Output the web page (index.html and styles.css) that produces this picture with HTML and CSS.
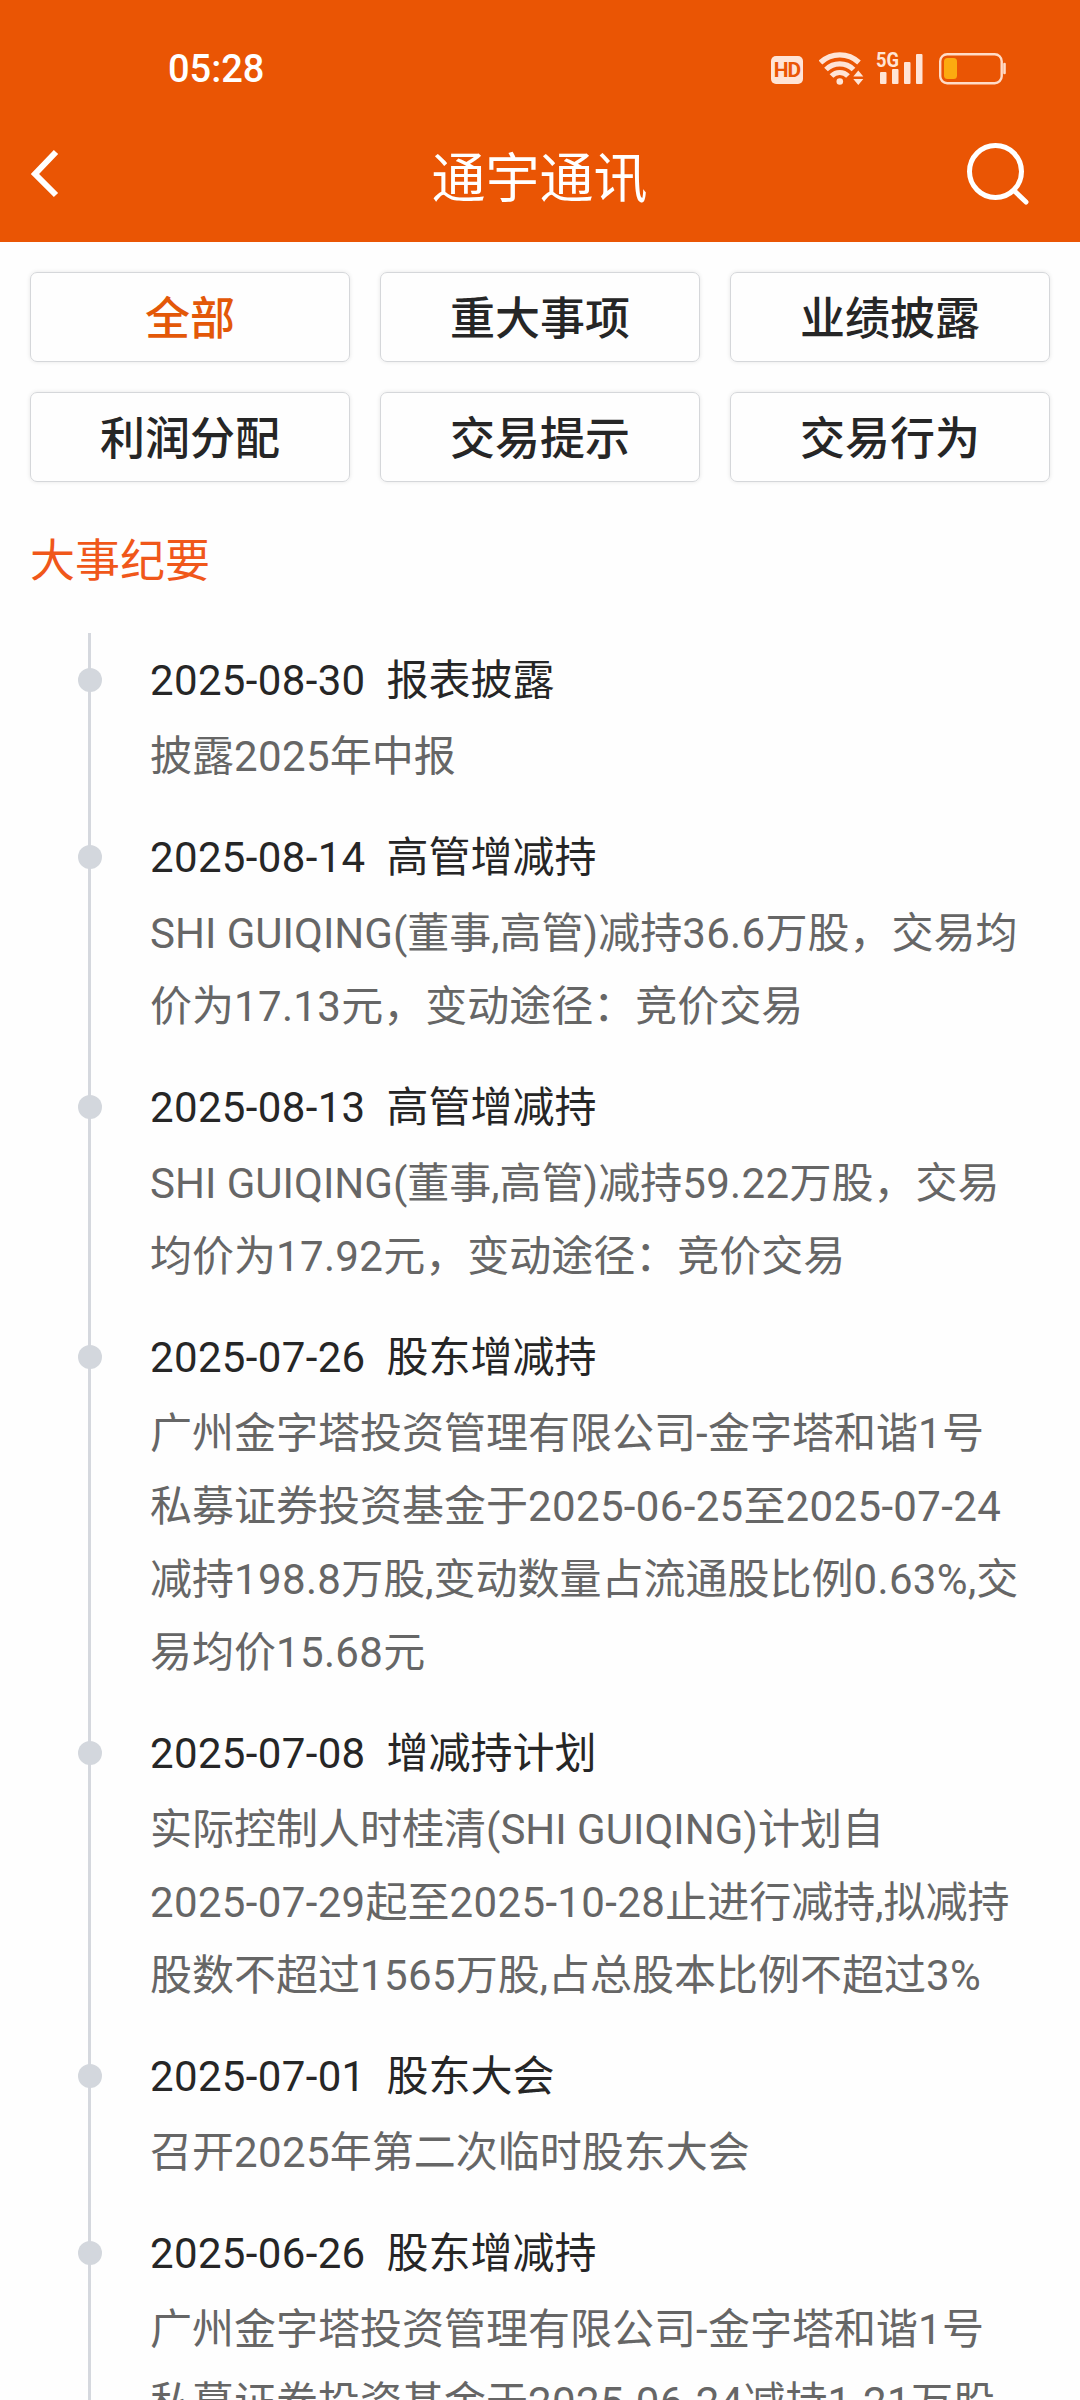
FILE: index.html
```html
<!DOCTYPE html>
<html lang="zh-CN">
<head>
  <meta charset="UTF-8">
  <title>通宇通讯</title>
  <link rel="stylesheet" href="styles.css">
</head>
<body>

  <header class="header">
    <div class="status-bar">
      <span class="time">05:28</span>
      <div class="status-icons">
        <span class="hd">HD</span>
        <svg class="wifi" width="46" height="36" viewBox="0 0 46 36">
          <g fill="none" stroke="#ffe4d6" stroke-width="5.200">
            <path d="M1.500 12.500a28 28 0 0 1 38.500 0"/>
            <path d="M7 19.500a19.500 19.500 0 0 1 27.500 0"/>
            <path d="M12.500 26a11.500 11.500 0 0 1 16.500 0"/>
          </g>
          <circle cx="20.800" cy="31.500" r="3.300" fill="#ffe4d6"/>
          <path d="M39.300 20.500l5 6h-10zM39.300 35l5-6h-10z" fill="#ffe4d6"/>
        </svg>
        <svg class="signal" width="48" height="36" viewBox="0 0 48 36">
          <text class="net" x="-1" y="17" textLength="23" lengthAdjust="spacingAndGlyphs">5G</text>
          <g fill="#ffe4d6">
            <rect x="3" y="22" width="6.500" height="12" rx="1"/>
            <rect x="15" y="19" width="6.500" height="15" rx="1"/>
            <rect x="27" y="12" width="6.500" height="22" rx="1"/>
            <rect x="39" y="4" width="6.500" height="30" rx="1"/>
          </g>
        </svg>
        <svg class="battery" width="68" height="32" viewBox="0 0 68 32">
          <rect x="1.200" y="1.200" width="61.500" height="29" rx="7" fill="none" stroke="#ffdcc8" stroke-width="2.400"/>
          <rect x="5" y="5" width="13" height="21" rx="3.500" fill="#fcab10"/>
          <path d="M65.500 11v9" stroke="#ffdcc8" stroke-width="2.600" stroke-linecap="round"/>
        </svg>
      </div>
    </div>
    <div class="nav">
      <svg class="back" width="32" height="50" viewBox="0 0 32 50">
        <path d="M26 3L5 25l21 21" fill="none" stroke="#fff" stroke-width="6"/>
      </svg>
      <h1>通宇通讯</h1>
      <svg class="search" width="66" height="66" viewBox="0 0 66 66">
        <g fill="none" stroke="#fff" stroke-width="5" stroke-linecap="round">
          <circle cx="30.500" cy="30.500" r="26"/>
          <path d="M49.500 50L61 61"/>
        </g>
      </svg>
    </div>
  </header>

  <div class="tabs">
    <div class="tab active">全部</div>
    <div class="tab">重大事项</div>
    <div class="tab">业绩披露</div>
    <div class="tab">利润分配</div>
    <div class="tab">交易提示</div>
    <div class="tab">交易行为</div>
  </div>

  <h2>大事纪要</h2>

  <div class="timeline">
    <div class="item">
      <div class="item-title"><span class="num">2025-08-30</span>&nbsp; 报表披露</div>
      <p>披露<span class="num">2025</span>年中报</p>
    </div>
    <div class="item">
      <div class="item-title"><span class="num">2025-08-14</span>&nbsp; 高管增减持</div>
      <p>SHI GUIQING(董事,高管)减持<span class="num">36.6</span>万股，交易均<br>价为<span class="num">17.13</span>元，变动途径：竞价交易</p>
    </div>
    <div class="item">
      <div class="item-title"><span class="num">2025-08-13</span>&nbsp; 高管增减持</div>
      <p>SHI GUIQING(董事,高管)减持<span class="num">59.22</span>万股，交易<br>均价为<span class="num">17.92</span>元，变动途径：竞价交易</p>
    </div>
    <div class="item">
      <div class="item-title"><span class="num">2025-07-26</span>&nbsp; 股东增减持</div>
      <p>广州金字塔投资管理有限公司<span class="num">-</span>金字塔和谐<span class="num">1</span>号<br>私募证券投资基金于<span class="num">2025-06-25</span>至<span class="num">2025-07-24</span><br>减持<span class="num">198.8</span>万股,变动数量占流通股比例<span class="num">0.63%</span>,交<br>易均价<span class="num">15.68</span>元</p>
    </div>
    <div class="item">
      <div class="item-title"><span class="num">2025-07-08</span>&nbsp; 增减持计划</div>
      <p>实际控制人时桂清(SHI GUIQING)计划自<br><span class="num">2025-07-29</span>起至<span class="num">2025-10-28</span>止进行减持,拟减持<br>股数不超过<span class="num">1565</span>万股,占总股本比例不超过<span class="num">3%</span></p>
    </div>
    <div class="item">
      <div class="item-title"><span class="num">2025-07-01</span>&nbsp; 股东大会</div>
      <p>召开<span class="num">2025</span>年第二次临时股东大会</p>
    </div>
    <div class="item">
      <div class="item-title"><span class="num">2025-06-26</span>&nbsp; 股东增减持</div>
      <p>广州金字塔投资管理有限公司<span class="num">-</span>金字塔和谐<span class="num">1</span>号<br>私募证券投资基金于<span class="num">2025-06-24</span>减持<span class="num">1.21</span>万股</p>
    </div>
  </div>

</body>
</html>
```

FILE: styles.css
```css
* {
  box-sizing: border-box;
}

body {
  margin: 0;
  height: 2400px;
  overflow: hidden;
  background: #fefefe;
  color: #262626;
  font-family: Roboto, 'Noto Sans CJK SC', sans-serif;
}

h1, h2, p {
  margin: 0;
  font-weight: 400;
}

.header {
  height: 242px;
  background: #ea5504;
  color: #fff;
}

.status-bar {
  display: flex;
  justify-content: space-between;
  height: 128px;
  padding: 50px 73px 0 168px;
}

.time {
  font-size: 38px;
  line-height: 38px;
  font-weight: 500;
}

.status-icons {
  display: flex;
  align-items: flex-start;
}

.hd {
  width: 32px;
  height: 28px;
  margin: 6px 16px 0 0;
  border-radius: 5px;
  background: #ffe4d6;
  color: #ea5504;
  font-size: 21px;
  line-height: 28px;
  font-weight: 700;
  letter-spacing: -1px;
  text-align: center;
}

.wifi {
  margin-right: 12px;
}

.net {
  font-size: 20px;
  font-weight: 700;
  fill: #ffe4d6;
}

.signal {
  margin-right: 14px;
  overflow: visible;
}

.battery {
  margin-top: 3px;
}

.nav {
  display: flex;
  justify-content: space-between;
  align-items: center;
  height: 92px;
  padding: 0 49px 0 30px;
}

.nav h1 {
  margin-left: 52px;
  margin-right: 0;
  padding-top: 12px;
  font-size: 54px;
  line-height: 80px;
}

.tabs {
  display: grid;
  grid-template-columns: repeat(3, 1fr);
  gap: 30px;
  padding: 30px 30px 0;
}

.tab {
  height: 90px;
  border: 1px solid #d5d7da;
  border-radius: 7px;
  box-shadow: 0 0 4px rgba(0, 0, 0, 0.1);
  font-size: 45px;
  line-height: 94px;
  font-weight: 500;
  text-align: center;
}

.tab.active {
  color: #e35808;
}

h2 {
  padding: 45px 30px 0;
  color: #f0571a;
  font-size: 45px;
  line-height: 70px;
}

.timeline {
  position: relative;
  margin-top: 36px;
  padding: 10px 0 0 150px;
}

.timeline::before {
  content: "";
  position: absolute;
  left: 88px;
  top: 0;
  width: 3px;
  height: 1767px;
  background: #d5d8de;
}

.item {
  position: relative;
  margin-bottom: 27px;
  font-size: 42px;
  white-space: nowrap;
}

.item::before {
  content: "";
  position: absolute;
  left: -72px;
  top: 25px;
  width: 24px;
  height: 24px;
  border-radius: 50%;
  background: #d3d7dd;
}

.item-title {
  line-height: 75px;
}

.item p {
  padding-top: 2px;
  color: #666;
  line-height: 73px;
}

.num {
  letter-spacing: 0.35px;
}
```
